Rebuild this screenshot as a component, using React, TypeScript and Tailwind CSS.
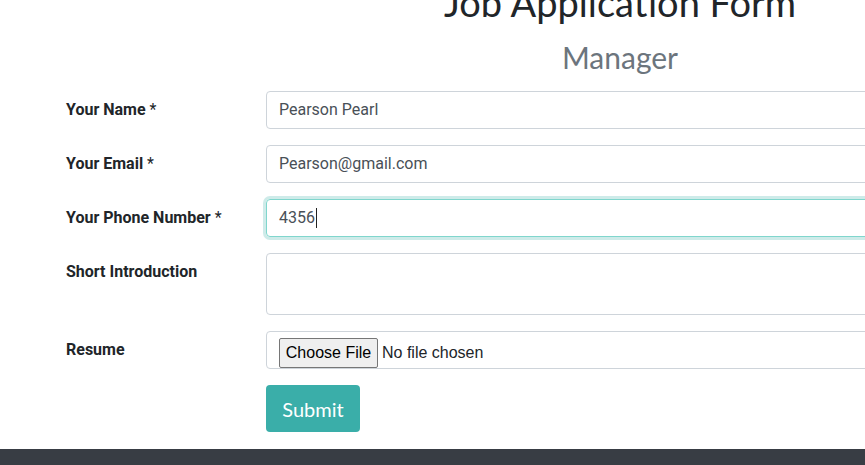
import React from "react";

const Label = ({ children, req }: { children: React.ReactNode; req?: boolean }) => (
  <div className="w-[200px] shrink-0 pt-[8px] text-[16px] font-bold text-[#212529] leading-[22px]" style={{ fontFamily: "Roboto, sans-serif" }}>
    {children}
    {req && <span className="font-normal"> *</span>}
  </div>
);

export default function App() {
  return (
    <div className="w-[865px] h-[465px] overflow-hidden bg-white flex flex-col" style={{ fontFamily: "Roboto, sans-serif" }}>
      <div className="w-[1240px] flex-1 flex flex-col">
        <h1 className="text-center text-[38px] leading-[44px] -mt-[20px] text-[#212529]" style={{ fontFamily: "Lato, sans-serif" }}>
          Job Application Form
        </h1>
        <h2 className="text-center text-[30px] leading-[40px] mt-[13px] text-[#6c757d]" style={{ fontFamily: "Lato, sans-serif" }}>
          Manager
        </h2>
        <div className="pl-[66px] mt-[14px] flex flex-col gap-[16px]">
          <div className="flex">
            <Label req>Your Name</Label>
            <div className="flex-1 h-[38px] border border-[#ced4da] rounded-[4px] px-[12px] flex items-center text-[16px] text-[#495057]">Pearson Pearl</div>
          </div>
          <div className="flex">
            <Label req>Your Email</Label>
            <div className="flex-1 h-[38px] border border-[#ced4da] rounded-[4px] px-[12px] flex items-center text-[16px] text-[#495057]">Pearson@gmail.com</div>
          </div>
          <div className="flex">
            <Label req>Your Phone Number</Label>
            <div className="flex-1 h-[38px] border border-[#80d6cd] rounded-[4px] px-[12px] flex items-center text-[16px] text-[#495057] shadow-[0_0_0_3px_rgba(58,174,169,0.25)]">
              4356<span className="inline-block w-[1px] h-[20px] bg-[#222] ml-[1px]" />
            </div>
          </div>
          <div className="flex">
            <Label>Short Introduction</Label>
            <div className="flex-1 h-[62px] border border-[#ced4da] rounded-[4px]" />
          </div>
          <div className="flex">
            <Label>Resume</Label>
            <div className="flex-1 h-[38px] border border-[#ced4da] rounded-[4px] pl-[12px] pt-[6px] flex items-start text-[16px] text-[#212529]" style={{ fontFamily: "'Liberation Sans', Arial, sans-serif" }}>
              <span className="h-[30px] w-[99px] flex items-center justify-center bg-[#efefef] border border-[#767676] rounded-[2px] text-black">Choose File</span>
              <span className="ml-[4px] leading-[30px] text-[#212529]">No file chosen</span>
            </div>
          </div>
          <div className="flex">
            <div className="w-[200px] shrink-0" />
            <button className="w-[94px] h-[47px] bg-[#3aaea9] rounded-[4px] text-white text-[20px]" style={{ fontFamily: "Lato, sans-serif" }}>Submit</button>
          </div>
        </div>
      </div>
      <div className="h-[16px] bg-[#383d44] shrink-0" />
    </div>
  );
}
